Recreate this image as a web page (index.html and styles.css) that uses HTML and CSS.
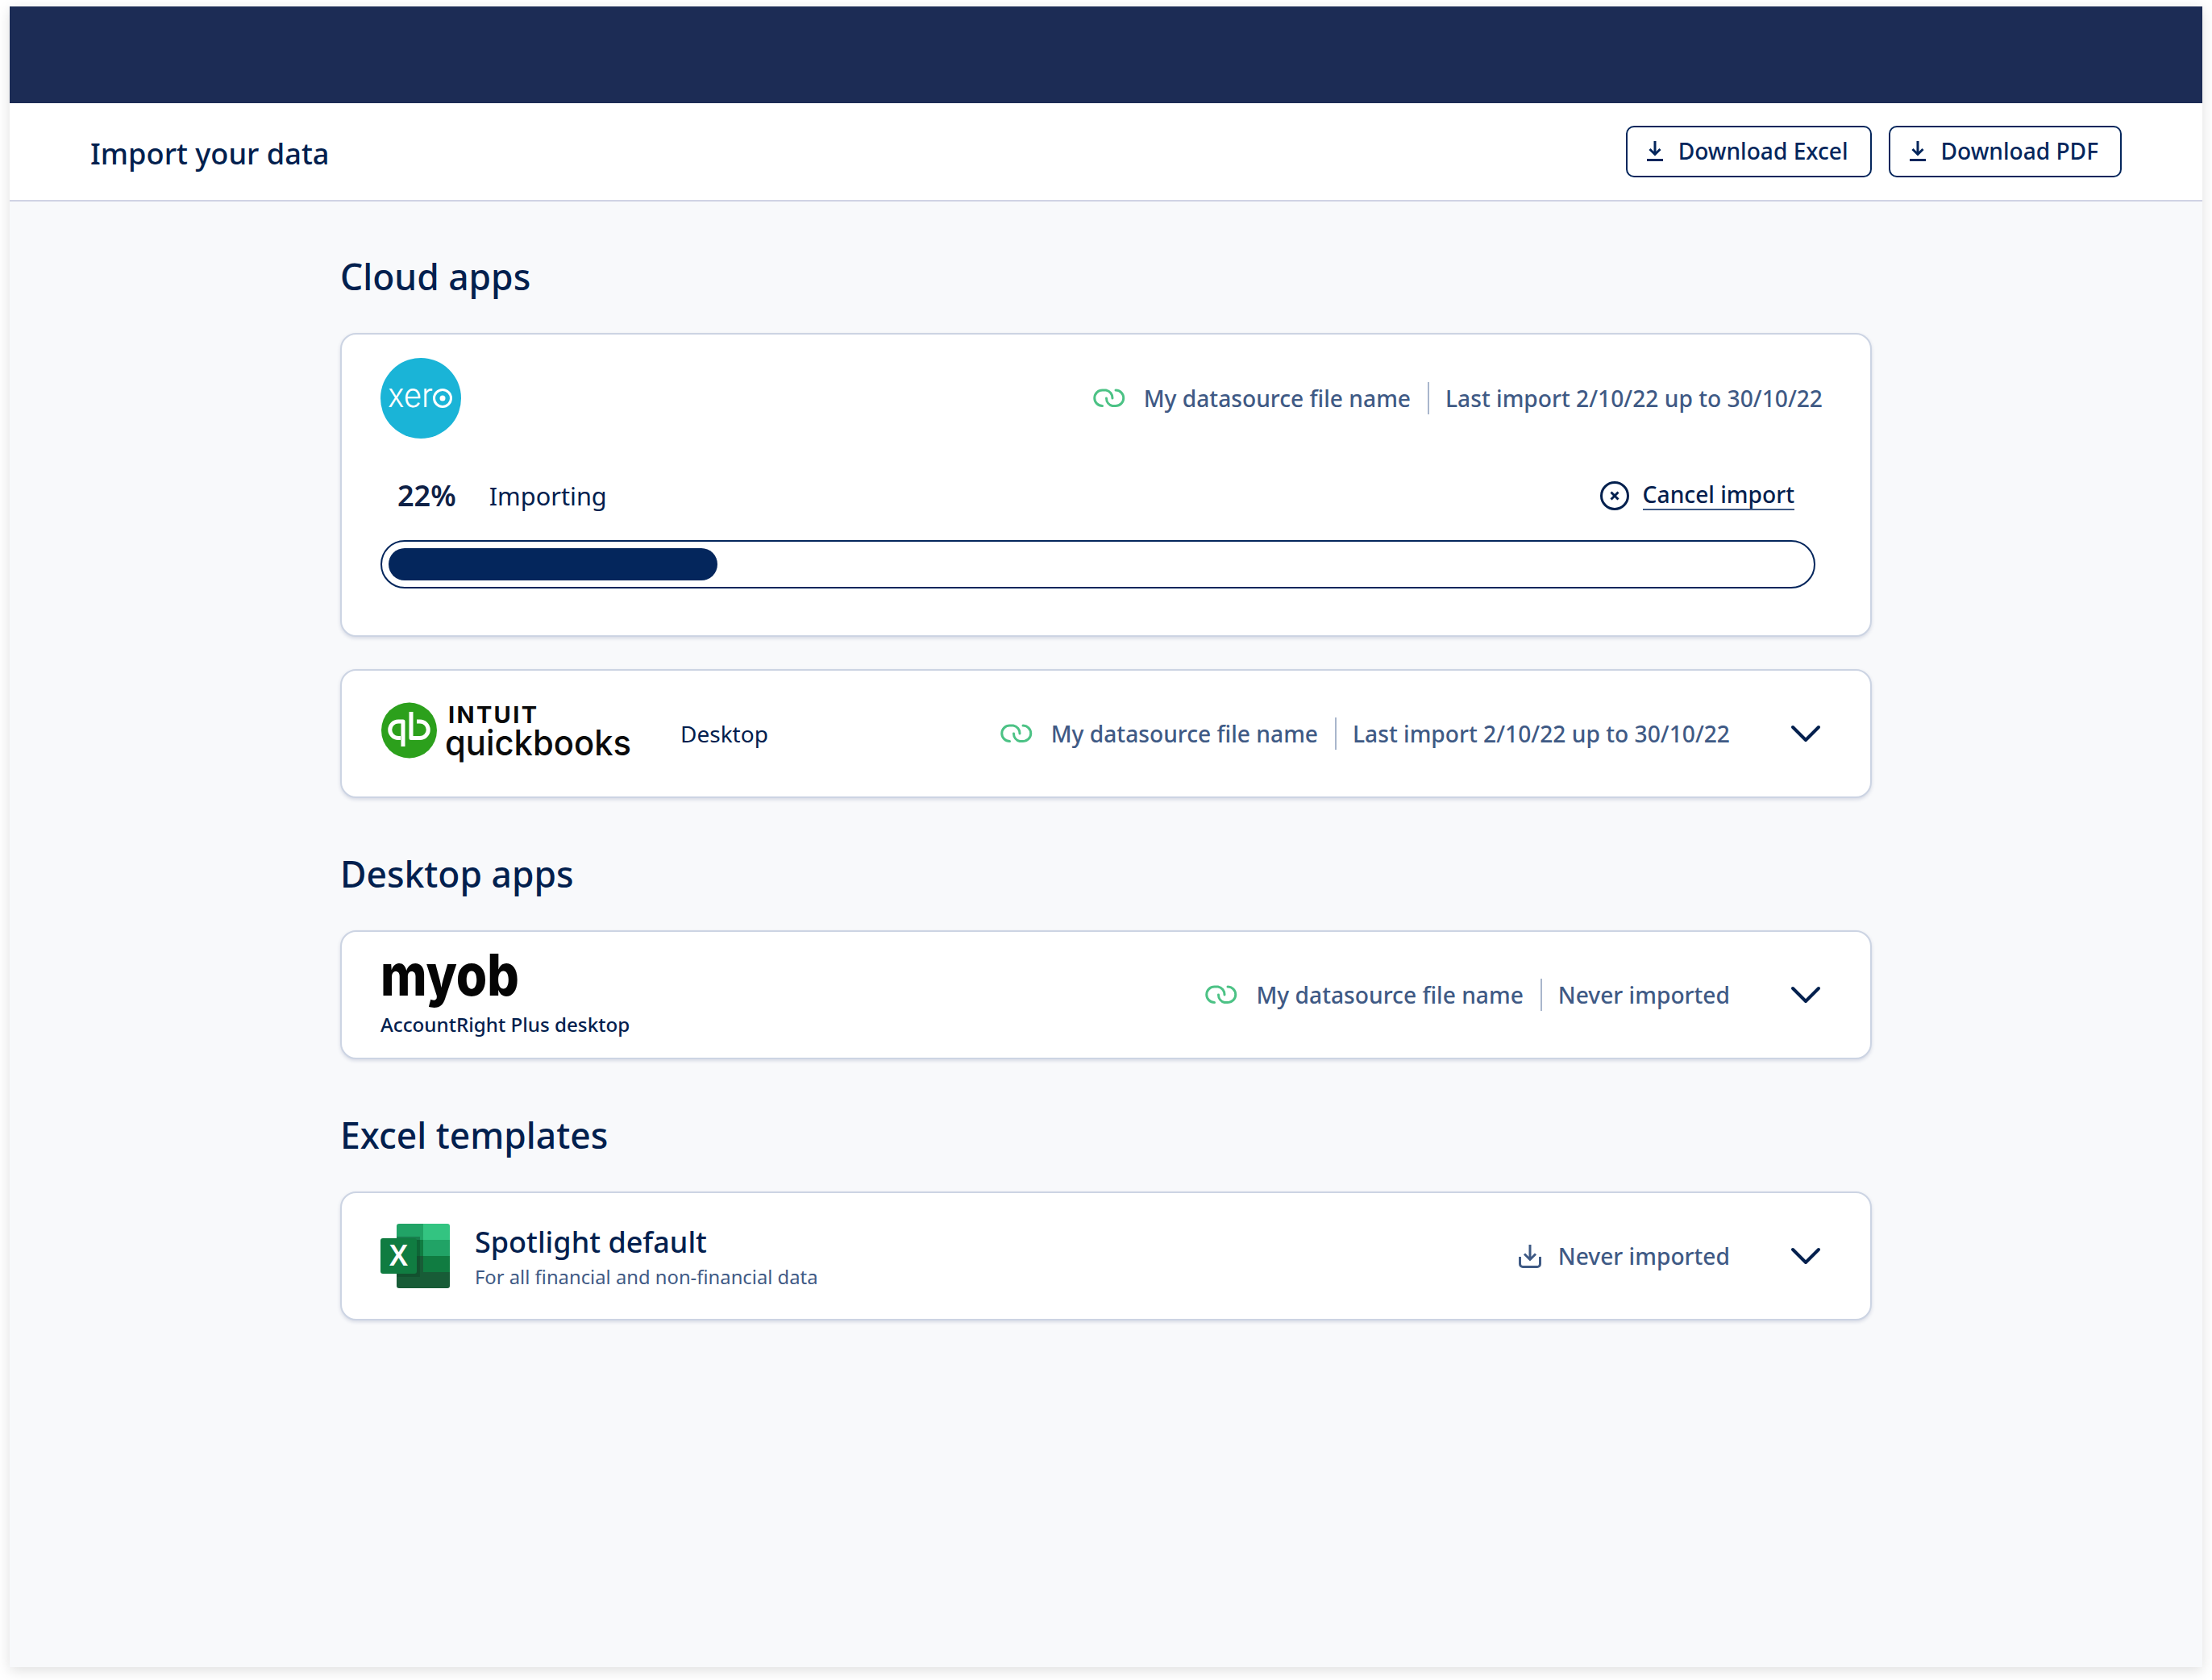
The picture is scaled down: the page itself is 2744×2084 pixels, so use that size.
FILE: index.html
```html
<!DOCTYPE html>
<html lang="en">
<head>
<meta charset="utf-8">
<title>Import your data</title>
<link rel="stylesheet" href="styles.css">
</head>
<body>
<div class="frame">
  <div class="topbar"></div>
  <header class="header">
    <h1 class="title">Import your data</h1>
    <div class="actions">
      <button class="btn">
        <svg class="btn-icon" viewBox="0 0 20 26"><path d="M10 1V17M3.5 11L10 17.5L16.500 11M0 24.500H20"/></svg>
        <span>Download Excel</span>
      </button>
      <button class="btn">
        <svg class="btn-icon" viewBox="0 0 20 26"><path d="M10 1V17M3.5 11L10 17.5L16.500 11M0 24.500H20"/></svg>
        <span>Download PDF</span>
      </button>
    </div>
  </header>
  <main class="main">
    <section class="section">
      <h2 class="heading">Cloud apps</h2>
      <div class="card card-import">
        <div class="import-top">
          <svg class="logo-xero" viewBox="0 0 100 100">
            <circle cx="50" cy="50" r="50" fill="#1ab4d7"/>
            <text x="9" y="61" textLength="56" lengthAdjust="spacingAndGlyphs" class="xero-text">xer</text>
            <circle cx="77" cy="50" r="10.500" fill="none" stroke="#fff" stroke-width="3"/>
            <circle cx="77" cy="50" r="3.500" fill="#fff"/>
          </svg>
          <div class="meta">
            <svg class="link-icon" viewBox="0 0 40 24"><path d="M11.500 21.500A9.750 9.750 0 0 1 11.500 2H16A9.750 9.750 0 0 1 24 12M28 2A9.750 9.750 0 0 1 28 21.500H24A9.750 9.750 0 0 1 16.500 12"/></svg>
            <span>My datasource file name</span>
            <i class="sep"></i>
            <span>Last import 2/10/22 up to 30/10/22</span>
          </div>
        </div>
        <div class="progress-row">
          <strong class="percent">22%</strong>
          <span class="status">Importing</span>
          <a class="cancel">
            <svg class="cancel-icon" viewBox="0 0 36 36"><circle cx="18" cy="18" r="16.500"/><path d="M13.500 13.500L22.500 22.500M22.500 13.500L13.500 22.500"/></svg>
            <span class="cancel-text">Cancel import</span>
          </a>
        </div>
        <div class="bar"><div class="bar-fill"></div></div>
      </div>
      <div class="card card-row card-next">
        <svg class="logo-qb" viewBox="0 0 310 76">
          <circle cx="35.500" cy="34" r="34.500" fill="#2ca01c"/>
          <path class="qb-mark" d="M28 54V23H22A10.250 10.250 0 0 0 22 43.500H25M38 11V43.500H49A10.250 10.250 0 0 0 49 23H45"/>
          <text x="84" y="25" textLength="110" lengthAdjust="spacing" class="qb-intuit">INTUIT</text>
          <text x="80" y="65" textLength="231" lengthAdjust="spacingAndGlyphs" class="qb-name">quickbooks</text>
        </svg>
        <span class="edition">Desktop</span>
        <div class="meta meta-end">
          <svg class="link-icon" viewBox="0 0 40 24"><path d="M11.500 21.500A9.750 9.750 0 0 1 11.500 2H16A9.750 9.750 0 0 1 24 12M28 2A9.750 9.750 0 0 1 28 21.500H24A9.750 9.750 0 0 1 16.500 12"/></svg>
          <span>My datasource file name</span>
          <i class="sep"></i>
          <span>Last import 2/10/22 up to 30/10/22</span>
        </div>
        <svg class="chevron" viewBox="0 0 36 20"><path d="M2 2L18 18L34 2"/></svg>
      </div>
    </section>
    <section class="section">
      <h2 class="heading">Desktop apps</h2>
      <div class="card card-row">
        <div class="myob">
          <svg class="logo-myob" viewBox="0 0 172 72">
            <text x="0" y="55" textLength="172" lengthAdjust="spacingAndGlyphs" class="myob-text">myob</text>
          </svg>
          <span class="myob-sub">AccountRight Plus desktop</span>
        </div>
        <div class="meta meta-end">
          <svg class="link-icon" viewBox="0 0 40 24"><path d="M11.500 21.500A9.750 9.750 0 0 1 11.500 2H16A9.750 9.750 0 0 1 24 12M28 2A9.750 9.750 0 0 1 28 21.500H24A9.750 9.750 0 0 1 16.500 12"/></svg>
          <span>My datasource file name</span>
          <i class="sep"></i>
          <span>Never imported</span>
        </div>
        <svg class="chevron" viewBox="0 0 36 20"><path d="M2 2L18 18L34 2"/></svg>
      </div>
    </section>
    <section class="section">
      <h2 class="heading">Excel templates</h2>
      <div class="card card-row">
        <svg class="logo-excel" viewBox="0 0 86 80">
          <path fill="#21a366" d="M23 0H53V20H20V3A3 3 0 0 1 23 0Z"/>
          <path fill="#33c481" d="M53 0H83A3 3 0 0 1 86 3V20H53Z"/>
          <path fill="#107c41" d="M20 20H53V40H20Z"/>
          <path fill="#21a366" d="M53 20H86V40H53Z"/>
          <path fill="#185c37" d="M20 40H53V60H20Z"/>
          <path fill="#107c41" d="M53 40H86V60H53Z"/>
          <path fill="#185c37" d="M20 60H86V77A3 3 0 0 1 83 80H23A3 3 0 0 1 20 77Z"/>
          <rect x="20" y="16" width="29" height="50" fill="#0b3d22" opacity=".35"/>
          <rect x="0" y="18" width="45" height="44" rx="3" fill="#107c41"/>
          <text x="22.500" y="52" class="excel-x">X</text>
        </svg>
        <div class="template">
          <span class="template-name">Spotlight default</span>
          <span class="template-sub">For all financial and non-financial data</span>
        </div>
        <div class="meta meta-end">
          <svg class="tray-icon" viewBox="0 0 28 30"><path d="M14 1V19M7 12.500L14 19.500L21 12.500M1.500 16V25A3.500 3.500 0 0 0 5 28.500H23A3.500 3.500 0 0 0 26.500 25V16"/></svg>
          <span>Never imported</span>
        </div>
        <svg class="chevron" viewBox="0 0 36 20"><path d="M2 2L18 18L34 2"/></svg>
      </div>
    </section>
  </main>
</div>
</body>
</html>
```

FILE: styles.css
```css
* { box-sizing: border-box; }
html, body { margin: 0; padding: 0; background: #fff; }
body {
  padding: 8px 12px 16px;
  font-family: "Noto Sans", "Open Sans", sans-serif;
  color: #02204e;
}
svg { overflow: visible; }
.frame {
  width: 2720px;
  height: 2060px;
  background: #f8f9fb;
  box-shadow: 0 4px 16px rgba(0, 0, 0, .13);
  display: flex;
  flex-direction: column;
}
.topbar { height: 120px; background: #1c2c55; flex: none; }
.header {
  height: 122px;
  flex: none;
  background: #fff;
  border-bottom: 2px solid #d0d3e4;
  padding: 0 100px;
  display: flex;
  align-items: center;
  justify-content: space-between;
}
.title { margin: 4px 0 0; font-size: 36.2px; font-weight: 500; line-height: 50px; }
.actions { display: flex; gap: 21px; }
.btn {
  height: 64px;
  padding: 0 27px 2px 24px;
  display: flex;
  align-items: center;
  gap: 19px;
  background: #fff;
  border: 2px solid #04265c;
  border-radius: 10px;
  font-family: inherit;
  font-size: 28.1px;
  font-weight: 500;
  color: #04265c;
}
.btn-icon { width: 20px; height: 26px; fill: none; stroke: #04265c; stroke-width: 3; }
.main { padding-top: 63px; display: flex; flex-direction: column; align-items: center; gap: 64px; }
.section { width: 1900px; }
.heading { margin: 0 0 40px; font-size: 44.4px; font-weight: 500; line-height: 60px; }
.card {
  background: #fff;
  border: 2px solid #ccd4e3;
  border-radius: 20px;
  box-shadow: 0 2px 4px rgba(60, 80, 130, .18);
}
.card-next { margin-top: 40px; }
.card-import { height: 377px; padding: 29px 59px 0 48px; }
.card-row {
  height: 160px;
  padding: 0 62px 0 48px;
  display: flex;
  align-items: center;
}
.import-top { display: flex; align-items: center; justify-content: space-between; }
.logo-xero { width: 100px; height: 100px; flex: none; }
.xero-text { font-family: Inter, sans-serif; font-weight: 300; font-size: 41px; fill: #fff; }
.meta { display: flex; align-items: center; font-size: 28.2px; color: #3f5a85; white-space: nowrap; font-weight: 500; }
.meta-end { margin-left: auto; }
.link-icon { width: 40px; height: 24px; margin-right: 23px; fill: none; stroke: #4cc285; stroke-width: 3; stroke-linecap: round; flex: none; }
.sep { width: 2px; height: 40px; margin: 0 20px 0 21px; background: #a9b6cc; flex: none; }
.progress-row { display: flex; align-items: center; height: 50px; margin: 46px 35px 0 21px; }
.percent { font-size: 36px; font-weight: 600; color: #0f2146; line-height: 50px; }
.status { margin-left: 41px; font-size: 30.7px; line-height: 50px; }
.cancel { margin-left: auto; display: flex; align-items: center; gap: 17px; }
.cancel-icon { width: 36px; height: 36px; fill: none; stroke: #02204e; stroke-width: 3; }
.cancel-text { font-size: 28.2px; font-weight: 500; line-height: 36px; border-bottom: 2px solid #3f5a85; margin-top: -2px; }
.bar {
  height: 60px;
  margin: 30px 9px 0 0;
  padding: 8px;
  border: 2px solid #04265c;
  border-radius: 30px;
}
.bar-fill { width: 408px; height: 40px; border-radius: 20px; background: #04265c; }
.logo-qb { width: 310px; height: 76px; flex: none; }
.qb-mark { fill: none; stroke: #fff; stroke-width: 5; stroke-linejoin: round; }
.qb-intuit { font-family: Inter, sans-serif; font-weight: 700; font-size: 29px; fill: #0a0a0a; }
.qb-name { font-family: Inter, sans-serif; font-weight: 500; font-size: 44px; fill: #0a0a0a; }
.edition { margin-left: 62px; font-size: 28px; }
.chevron { width: 36px; height: 20px; margin-left: 76px; flex: none; fill: none; stroke: #02204e; stroke-width: 4; stroke-linecap: round; stroke-linejoin: round; }
.myob { display: flex; flex-direction: column; }
.logo-myob { width: 172px; height: 72px; }
.myob-text { font-family: Inter, sans-serif; font-weight: 800; font-size: 72px; fill: #050505; }
.myob-sub { font-size: 24.2px; font-weight: 500; line-height: 36px; margin-top: 1px; }
.logo-excel { width: 86px; height: 80px; flex: none; }
.excel-x { font-family: "Noto Sans", sans-serif; font-weight: 600; font-size: 36px; fill: #fff; text-anchor: middle; }
.template { margin: 2px 0 0 31px; display: flex; flex-direction: column; }
.template-name { font-size: 36px; font-weight: 500; line-height: 50px; }
.template-sub { font-size: 23.8px; color: #3f5a85; line-height: 36px; }
.tray-icon { width: 28px; height: 30px; margin-right: 21px; fill: none; stroke: #3f5a85; stroke-width: 3; flex: none; }
```
